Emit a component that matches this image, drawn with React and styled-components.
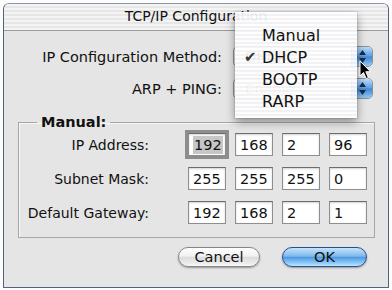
import React from 'react';
import styled, { createGlobalStyle } from 'styled-components';

const GlobalStyle = createGlobalStyle`
  html,
  body {
    margin: 0;
    background: #fcfcfd;
    width: 392px;
    height: 290px;
    overflow: hidden;
  }

  body {
    font-family: 'DejaVu Sans', 'Liberation Sans', sans-serif;
    color: #111;
  }
`;

const StyledWindow = styled.div`
  background: #e5e5e5;
  border: 1px solid #56617a;
  border-top-color: #8d94a2;
  border-radius: 6px 6px 0 0;
  box-sizing: border-box;
  display: flex;
  flex-direction: column;
  height: 285px;
  margin: 3px 0 0 3px;
  position: relative;
  width: 386px;
`;

const StyledTitleBar = styled.div`
  align-items: center;
  background: repeating-linear-gradient(
    to bottom,
    #f4f4f4 0,
    #f4f4f4 2px,
    #e6e6e6 2px,
    #e6e6e6 4px
  );
  border-bottom: 1px solid #9b9b9b;
  border-radius: 5px 5px 0 0;
  box-sizing: border-box;
  display: flex;
  font-size: 14px;
  height: 27px;
  justify-content: center;
  padding-bottom: 2px;
`;

const StyledBody = styled.div`
  display: flex;
  flex: 1;
  flex-direction: column;
  padding: 15px 13px 0 14px;
`;

const StyledTopGrid = styled.div`
  align-items: center;
  column-gap: 11px;
  display: grid;
  grid-template-columns: 1fr 140px;
  margin-right: 2px;
  row-gap: 11px;
`;

const StyledLabel = styled.div`
  font-size: ${({ size }) => size || 14.5}px;
  padding-right: ${({ inset }) => inset || 0}px;
  text-align: right;
  white-space: nowrap;
`;

const StyledPopup = styled.div`
  background: linear-gradient(#ffffff, #f3f3f3 50%, #e9e9e9 51%, #fbfbfb);
  border: 1px solid #8f8f8f;
  border-radius: 5px;
  box-sizing: border-box;
  display: flex;
  height: 21px;
  overflow: hidden;
`;

const StyledPopupText = styled.div`
  align-items: center;
  color: ${({ dim }) => (dim ? '#8a8a8a' : '#111')};
  display: flex;
  flex: 1;
  font-size: 14.5px;
  padding-left: 11px;
`;

const StyledPopupArrow = styled.div`
  align-items: center;
  background: linear-gradient(#b9dcfa, #5c9fe3 48%, #3f86d6 52%, #8fc9f6);
  border-left: 1px solid #3c6aa8;
  display: flex;
  justify-content: center;
  width: 20px;
`;

const StyledFieldset = styled.fieldset`
  border: 1px solid #a6a6a6;
  box-shadow: inset 1px 1px 0 #f6f6f6;
  margin: 15px 0 0;
  padding: 2px 7px 13px 0;
`;

const StyledLegend = styled.legend`
  font-size: 14.5px;
  font-weight: bold;
  line-height: 17px;
  margin-left: 18px;
  padding: 0 4px;
`;

const StyledFieldGrid = styled.div`
  align-items: center;
  column-gap: 9px;
  display: grid;
  grid-template-columns: 1fr repeat(4, 38px);
  row-gap: 11px;
`;

const StyledTextField = styled.div`
  align-items: center;
  background: #fff;
  border: 1px solid #8e8e8e;
  border-top-color: #6c6c6c;
  box-shadow: inset 0 1px 2px rgba(0, 0, 0, 0.18);
  box-sizing: border-box;
  display: flex;
  font-size: 14.5px;
  height: 23px;
  outline: ${({ focused }) => (focused ? '3px solid #8d8d8d' : 'none')};
  padding-left: 4px;
`;

const StyledSelection = styled.span`
  background: #c6c6c6;
  padding: 1px 1px;
`;

const StyledButtonRow = styled.div`
  display: flex;
  gap: 22px;
  justify-content: flex-end;
  margin-top: 9px;
  padding-right: 8px;
`;

const StyledButton = styled.div`
  align-items: center;
  background: ${({ primary }) =>
    primary
      ? 'linear-gradient(#c6e3fb, #7fb9ec 45%, #5299e0 52%, #8fcdfb 85%, #c0e8ff)'
      : 'linear-gradient(#ffffff, #f1f1f1 45%, #dcdcdc 52%, #ececec 85%, #fbfbfb)'};
  border: 1px solid ${({ primary }) => (primary ? '#2d4f8c' : '#878787')};
  border-radius: 10px;
  box-shadow: 0 1px 2px rgba(0, 0, 0, 0.35);
  box-sizing: border-box;
  display: flex;
  font-size: 14.5px;
  height: 20px;
  justify-content: center;
  width: ${({ width }) => width}px;
`;

const StyledMenu = styled.div`
  background: repeating-linear-gradient(
    to bottom,
    rgba(255, 255, 255, 0.93) 0,
    rgba(255, 255, 255, 0.93) 2px,
    rgba(243, 243, 245, 0.93) 2px,
    rgba(243, 243, 245, 0.93) 4px
  );
  box-shadow: 0 4px 9px rgba(0, 0, 0, 0.4), 0 0 0 1px rgba(0, 0, 0, 0.08);
  left: 231px;
  padding: 12px 0 6px;
  position: absolute;
  top: 8px;
  width: 122px;
`;

const StyledMenuItem = styled.div`
  align-items: center;
  display: flex;
  font-size: 16px;
  height: 22px;
  padding-left: 27px;
  position: relative;
`;

const StyledCheck = styled.span`
  color: #333;
  font-size: 15px;
  left: 9px;
  position: absolute;
`;

const StyledCursor = styled.svg`
  left: 355px;
  position: absolute;
  top: 56px;
`;

const StepperIcon = () => (
  <svg width="9" height="15" viewBox="0 0 9 15">
    <path d="M4.5 1 L8 6 H1 Z" fill="#1d2c44" />
    <path d="M4.5 14 L8 9 H1 Z" fill="#1d2c44" />
  </svg>
);

const addressRows = [
  { label: 'IP Address:', values: ['192', '168', '2', '96'] },
  { label: 'Subnet Mask:', values: ['255', '255', '255', '0'] },
  { label: 'Default Gateway:', values: ['192', '168', '2', '1'] },
];

const menuItems = ['Manual', 'DHCP', 'BOOTP', 'RARP'];

const App = () => (
  <>
    <GlobalStyle />
    <StyledWindow>
      <StyledTitleBar>TCP/IP Configuration</StyledTitleBar>

      <StyledBody>
        <StyledTopGrid>
          <StyledLabel>IP Configuration Method:</StyledLabel>
          <StyledPopup>
            <StyledPopupText>DHCP</StyledPopupText>
            <StyledPopupArrow>
              <StepperIcon />
            </StyledPopupArrow>
          </StyledPopup>

          <StyledLabel>ARP + PING:</StyledLabel>
          <StyledPopup>
            <StyledPopupText dim>Enable</StyledPopupText>
            <StyledPopupArrow>
              <StepperIcon />
            </StyledPopupArrow>
          </StyledPopup>
        </StyledTopGrid>

        <StyledFieldset>
          <StyledLegend>Manual:</StyledLegend>
          <StyledFieldGrid>
            {addressRows.map((row, rowIndex) => (
              <React.Fragment key={row.label}>
                <StyledLabel size={14} inset={30}>
                  {row.label}
                </StyledLabel>
                {row.values.map((value, i) => {
                  const focused = rowIndex === 0 && i === 0;
                  return (
                    <StyledTextField key={i} focused={focused}>
                      {focused ? <StyledSelection>{value}</StyledSelection> : value}
                    </StyledTextField>
                  );
                })}
              </React.Fragment>
            ))}
          </StyledFieldGrid>
        </StyledFieldset>

        <StyledButtonRow>
          <StyledButton width={82}>Cancel</StyledButton>
          <StyledButton primary width={85}>
            OK
          </StyledButton>
        </StyledButtonRow>
      </StyledBody>

      <StyledMenu>
        {menuItems.map((item) => (
          <StyledMenuItem key={item}>
            {item === 'DHCP' && <StyledCheck>✔</StyledCheck>}
            {item}
          </StyledMenuItem>
        ))}
      </StyledMenu>

      <StyledCursor width="13" height="20" viewBox="0 0 13 20">
        <path
          d="M1 1 L1 16 L4.5 12.5 L7.2 18.6 L9.4 17.6 L6.8 11.7 L11.5 11.7 Z"
          fill="#000"
          stroke="#fff"
          strokeWidth="1"
          strokeLinejoin="round"
        />
      </StyledCursor>
    </StyledWindow>
  </>
);

export default App;
